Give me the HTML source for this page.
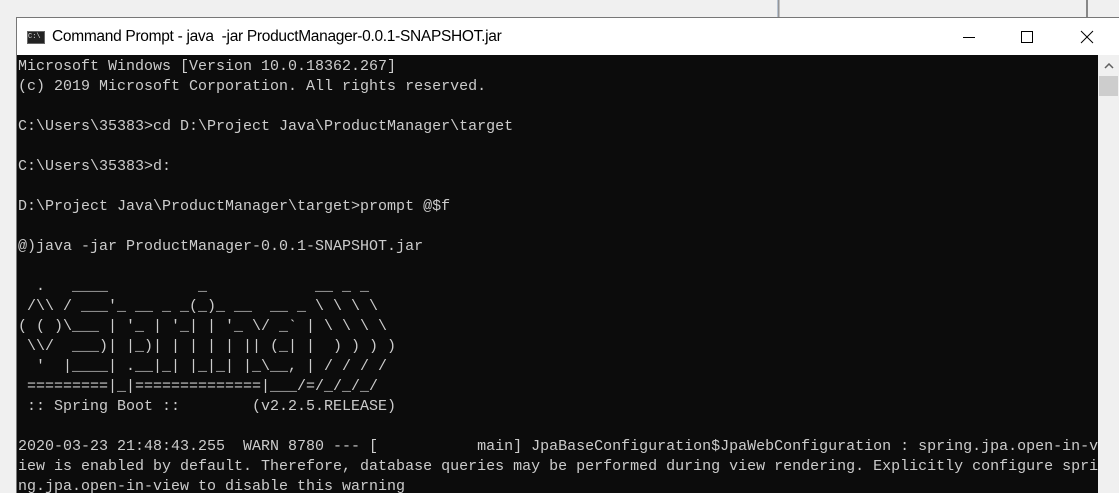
<!DOCTYPE html>
<html><head><meta charset="utf-8"><style>
html,body{margin:0;padding:0;width:1119px;height:493px;overflow:hidden;background:#f0f0f0;position:relative}
.l1{position:absolute;left:777px;top:0;width:3px;height:17px;background:linear-gradient(90deg,#cfe0f5,#888,#ddd)}
.l2{position:absolute;left:1086px;top:0;width:2px;height:17px;background:#888}
.win{position:absolute;left:16px;top:17px;width:1103px;height:476px;border-top:1px solid #777;border-left:1px solid #777;background:#fff}
.title{position:absolute;left:0;top:0;height:37px;width:1103px;background:#fff;font:15.5px "Liberation Sans",sans-serif;color:#000}
.title .t{position:absolute;left:35px;top:10px;letter-spacing:-0.3px}
.ico{position:absolute;left:10px;top:13px;width:16px;height:11px;background:#222;border:1px solid #666;font:7px "Liberation Mono",monospace;color:#ddd;line-height:11px}
.con{position:absolute;left:0;top:37px;width:1081px;height:440px;background:#0c0c0c;overflow:hidden}
pre{margin:0;padding:2px 0 0 1px;font:15px/20px "Liberation Mono",monospace;color:#cccccc;white-space:pre}
.sb{position:absolute;left:1081px;top:37px;width:22px;height:440px;background:#f0f0f0}
.thumb{position:absolute;left:1px;top:21px;width:19px;height:20px;background:#cdcdcd}
</style></head><body>
<div class="l1"></div><div class="l2"></div>
<div class="win">
<div class="title"><div class="ico">C:\</div><span class="t">Command Prompt - java &nbsp;-jar ProductManager-0.0.1-SNAPSHOT.jar</span>
<svg style="position:absolute;left:940px;top:10px" width="160" height="20">
<line x1="6" y1="9.5" x2="18" y2="9.5" stroke="#000" stroke-width="1"/>
<rect x="64.5" y="3.5" width="11" height="11" fill="none" stroke="#000"/>
<line x1="124" y1="3" x2="136" y2="15" stroke="#000"/><line x1="136" y1="3" x2="124" y2="15" stroke="#000"/>
</svg></div>
<div class="con"><pre>Microsoft Windows [Version 10.0.18362.267]
(c) 2019 Microsoft Corporation. All rights reserved.

C:\Users\35383&gt;cd D:\Project Java\ProductManager\target

C:\Users\35383&gt;d:

D:\Project Java\ProductManager\target&gt;prompt @$f

@)java -jar ProductManager-0.0.1-SNAPSHOT.jar

  .   ____          _            __ _ _
 /\\ / ___'_ __ _ _(_)_ __  __ _ \ \ \ \
( ( )\___ | '_ | '_| | '_ \/ _` | \ \ \ \
 \\/  ___)| |_)| | | | | || (_| |  ) ) ) )
  '  |____| .__|_| |_|_| |_\__, | / / / /
 =========|_|==============|___/=/_/_/_/
 :: Spring Boot ::        (v2.2.5.RELEASE)

2020-03-23 21:48:43.255  WARN 8780 --- [           main] JpaBaseConfiguration$JpaWebConfiguration : spring.jpa.open-in-v
iew is enabled by default. Therefore, database queries may be performed during view rendering. Explicitly configure spri
ng.jpa.open-in-view to disable this warning</pre></div>
<div class="sb"><svg style="position:absolute;left:6px;top:8px" width="10" height="6"><polyline points="1,5 5,1 9,5" fill="none" stroke="#606060" stroke-width="1.5"/></svg><div class="thumb"></div></div>
</div>
</body></html>
